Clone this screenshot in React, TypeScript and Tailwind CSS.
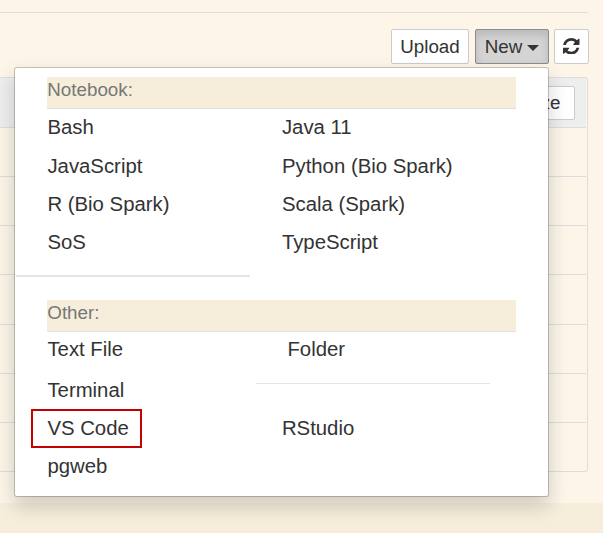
const notebooks = [
  ["Bash", "Java 11"],
  ["JavaScript", "Python (Bio Spark)"],
  ["R (Bio Spark)", "Scala (Spark)"],
  ["SoS", "TypeScript"],
];

function RefreshIcon() {
  return (
    <svg viewBox="0 0 1536 1536" className="-mt-px h-[16.5px] w-[16.5px]" fill="#333">
      <path d="M1511 928q0 5-1 7-64 268-268 434.500T764 1536q-146 0-282.500-55T238 1324l-129 129q-19 19-45 19t-45-19-19-45V960q0-26 19-45t45-19h448q26 0 45 19t19 45-19 45l-137 137q71 66 161 102t187 36q134 0 250-65t186-179q11-17 53-117 8-23 30-23h192q13 0 22.500 9.500t9.500 22.500zm25-800v448q0 26-19 45t-45 19h-448q-26 0-45-19t-19-45 19-45l138-138Q969 256 768 256q-134 0-250 65T332 500q-11 17-53 117-8 23-30 23H50q-13 0-22.500-9.500T18 608v-7q65-268 270-434.500T768 0q146 0 284 55.500T1297 212l130-129q19-19 45-19t45 19 19 45z" />
    </svg>
  );
}

function Heading({ text }: { text: string }) {
  return (
    <div className="ml-8 h-8 w-[469px] border-b border-[#e0e0e0] bg-[#f6eedb] pl-[0.3px] text-[18.8px] leading-[26px] text-[#777]">
      {text}
    </div>
  );
}

function Entry({ text }: { text: string }) {
  return <a className="block whitespace-nowrap pl-[0.4px] text-[20.35px] leading-7">{text}</a>;
}

function Menu() {
  return (
    <div className="absolute left-[14px] top-[67px] h-[430px] w-[535px] rounded-[3px] border border-black/20 bg-white bg-clip-padding pt-[9px] text-[#333] shadow-[0_9px_19px_rgba(0,0,0,0.175)]">
      <Heading text="Notebook:" />
      <div className="ml-8 mt-[4.4px] grid grid-cols-[234.5px_1fr] gap-y-[10.3px]">
        {notebooks.flat().map((name) => (
          <Entry key={name} text={name} />
        ))}
      </div>
      <div className="ml-px mt-[18.7px] h-0.5 w-[234px] bg-[#e5e5e5]" />
      <div className="mt-[23px]">
        <Heading text="Other:" />
      </div>
      <div className="mt-[3px] flex">
        <div className="w-[241px] pl-8">
          <Entry text="Text File" />
          <div className="mt-[13px]">
            <Entry text="Terminal" />
          </div>
          <div className="-ml-4 mt-[5px] h-[39px] w-[111px] border-2 border-[#c40000] pl-3.5 pt-[3px]">
            <Entry text="VS Code" />
          </div>
          <div className="mt-1">
            <Entry text="pgweb" />
          </div>
        </div>
        <div className="w-[234px]">
          <div className="pl-[31px]">
            <Entry text="Folder" />
          </div>
          <div className="mt-5 h-px bg-[#e5e5e5]" />
          <div className="mt-[30px] pl-[25.5px]">
            <Entry text="RStudio" />
          </div>
        </div>
      </div>
    </div>
  );
}

export default function App() {
  return (
    <div className="relative flex h-[533px] w-[603px] flex-col overflow-hidden bg-[#fcf5e8] font-['Liberation_Sans',Arial,sans-serif] text-[18.8px] text-[#333]">
      <div className="mt-3 h-px w-[588px] shrink-0 bg-[#ddd]" />
      <div className="mt-4 flex h-[35px] justify-end gap-[5px] pr-3.5">
        <button className="mr-px flex w-[78px] items-center justify-center rounded-[2px] border border-[#ccc] bg-white pt-0.5">
          Upload
        </button>
        <button className="flex w-[74px] items-center justify-center gap-[5px] rounded-[2px] border border-[#8c8c8c] bg-[#d4d4d4] pt-0.5 shadow-[inset_0_5px_8px_rgba(0,0,0,0.125)]">
          New
          <span className="h-0 w-0 border-x-[6px] border-t-[6px] border-x-transparent border-t-[#333]" />
        </button>
        <button className="flex w-[35px] items-center justify-center rounded-[2px] border border-[#ccc] bg-white">
          <RefreshIcon />
        </button>
      </div>
      <div className="-ml-1 mt-[13px] h-[395px] w-[592px] shrink-0 rounded-[3px] border border-[#ddd] pr-px">
        <div className="flex h-[50px] items-center justify-end border-b border-[#ddd] bg-[#eee] pr-[11px]">
          <div className="mt-px flex h-[34px] w-[100px] items-center justify-end rounded-[2px] border border-[#ccc] bg-white pr-[13.5px]">
            File size
          </div>
        </div>
        <div className="h-[49px] border-b border-[#ddd]" />
        <div className="h-[49px] border-b border-[#ddd]" />
        <div className="h-[49px] border-b border-[#ddd]" />
        <div className="h-[50px] border-b border-[#ddd]" />
        <div className="h-[49px] border-b border-[#ddd]" />
        <div className="h-[49px] border-b border-[#ddd]" />
      </div>
      <div className="mt-[31px] h-[30px] shrink-0 bg-[#f6eedb]" />
      <Menu />
    </div>
  );
}
